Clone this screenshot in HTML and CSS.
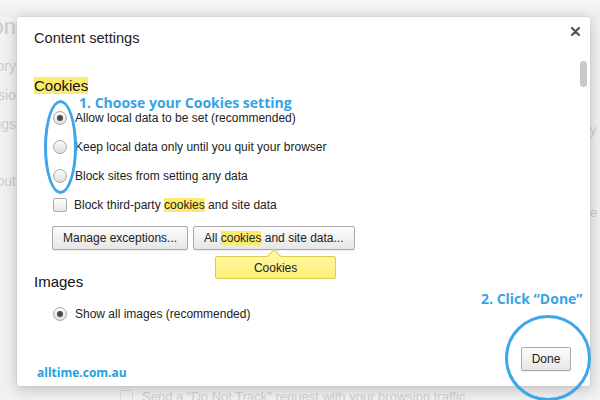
FILE: index.html
```html
<!DOCTYPE html>
<html>
<head>
<meta charset="utf-8">
<link rel="stylesheet" href="styles.css">
</head>
<body>
<div class="page">
  <div class="topband"></div>
  <div class="bg-body">
    <nav class="bg-nav">
      <div class="bg-logo">Extension</div>
      <div class="bg-item first">History</div>
      <div class="bg-item">Extensio</div>
      <div class="bg-item">Settings</div>
      <div class="bg-item gap">About</div>
    </nav>
    <div class="bg-main">
      <div class="bg-row dnt"><span class="bg-check"></span><span>Send a "Do Not Track" request with your browsing traffic</span></div>
    </div>
  </div>
  <div class="bg-right">
    <div class="bg-r1">y</div>
    <div class="bg-r2">e a</div>
  </div>
</div>

<div class="dialog">
  <div class="dialog-header">
    <h1 class="title">Content settings</h1>
    <span class="close">
      <svg width="9" height="9" viewBox="0 0 9 9"><path d="M1 1 L8 8 M8 1 L1 8" stroke="#555" stroke-width="2.2" stroke-linecap="round"/></svg>
    </span>
  </div>
  <div class="scrollbar"><div class="thumb"></div></div>
  <div class="content">
    <h2 class="section"><span class="hl">Cookies</span></h2>
    <div class="options">
      <label class="row"><span class="radio on"></span><span>Allow local data to be set (recommended)</span></label>
      <label class="row"><span class="radio"></span><span>Keep local data only until you quit your browser</span></label>
      <label class="row"><span class="radio"></span><span>Block sites from setting any data</span></label>
      <label class="row chk"><span class="check"></span><span>Block third-party <span class="hl">cookies</span> and site data</span></label>
    </div>
    <div class="buttons">
      <button class="btn">Manage exceptions...</button>
      <button class="btn has-tip">All <span class="hl">cookies</span> and site data...<span class="tooltip">Cookies</span></button>
    </div>
    <h2 class="section images">Images</h2>
    <div class="options">
      <label class="row"><span class="radio on"></span><span>Show all images (recommended)</span></label>
    </div>
  </div>
  <div class="footer">
    <button class="btn done">Done</button>
  </div>

  <div class="note note1">1. Choose your Cookies setting</div>
  <div class="ring ring1"></div>
  <div class="note note2">2. Click “Done”</div>
  <div class="ring ring2"></div>
  <div class="brand">alltime.com.au</div>
</div>
</body>
</html>
```
FILE: styles.css
```css
html, body {
  margin: 0;
  padding: 0;
}
body {
  width: 600px;
  height: 400px;
  overflow: hidden;
  position: relative;
  font-family: "Liberation Sans", Arial, Helvetica, sans-serif;
  background: #f1f1f1;
  color: #222;
}
.page {
  height: 400px;
  display: flex;
  flex-direction: column;
  color: #c4c4c4;
  position: relative;
}
.topband {
  height: 17px;
  background: linear-gradient(#f7f7f7, #ededed);
  flex: none;
}
.bg-body {
  display: flex;
  flex: 1;
}
.bg-nav {
  width: 16px;
  overflow: hidden;
  display: flex;
  flex-direction: column;
  align-items: flex-end;
  flex: none;
}
.bg-logo {
  font-size: 22px;
  line-height: 26px;
  margin-top: -3px;
  white-space: nowrap;
  color: #cbcbcb;
}
.bg-item {
  font-size: 14px;
  line-height: 29px;
  white-space: nowrap;
  color: #cdcdcd;
}
.bg-item.first { margin-top: 12px; }
.bg-item.gap { margin-top: 28px; }
.bg-main {
  flex: 1;
  display: flex;
  flex-direction: column;
  justify-content: flex-end;
}
.bg-row {
  font-size: 13px;
  white-space: nowrap;
  display: flex;
  align-items: center;
  gap: 9px;
  color: #d0d0d0;
}
.dnt {
  margin-left: 104px;
  margin-bottom: -4px;
  height: 16px;
}
.bg-check {
  width: 11px;
  height: 11px;
  border: 1px solid #dcdcdc;
  border-radius: 2px;
}
.bg-right {
  position: absolute;
  right: 0;
  top: 0;
  width: 10px;
  height: 400px;
  overflow: hidden;
  display: flex;
  flex-direction: column;
  align-items: flex-start;
}
.bg-r1 {
  margin-top: 122px;
  font-size: 13px;
  color: #d0d0d0;
}
.bg-r2 {
  margin-top: 68px;
  font-size: 13px;
  color: #cccccc;
  white-space: nowrap;
}

/* dialog */
.dialog {
  position: absolute;
  left: 17px;
  top: 17px;
  width: 573px;
  height: 369px;
  background: #fff;
  border-radius: 3px;
  box-shadow: 0 3px 14px rgba(0,0,0,0.22), 0 0 2px rgba(0,0,0,0.12);
  display: flex;
  flex-direction: column;
  color: #222;
}
.dialog-header {
  display: flex;
  justify-content: space-between;
  align-items: center;
  padding: 12px 10px 0 17px;
}
.title {
  margin: 0;
  font-size: 14.6px;
  font-weight: normal;
  line-height: 18px;
  color: #222;
}
.close {
  display: flex;
  margin-top: -14px;
}
.scrollbar {
  position: absolute;
  right: 3px;
  top: 44px;
  width: 7px;
}
.thumb {
  height: 26px;
  border-radius: 4px;
  background: #c9c9c9;
}
.content {
  padding: 0 17px;
}
.section {
  margin: 30px 0 0;
  font-size: 15px;
  font-weight: normal;
  line-height: 18px;
  color: #111;
}
.section.images {
  margin-top: 23px;
}
.hl {
  background: #fbea6c;
}
.options {
  margin-top: 8px;
  display: flex;
  flex-direction: column;
}
.row {
  height: 29px;
  display: flex;
  align-items: center;
  font-size: 12px;
  color: #222;
  padding-left: 19px;
  white-space: nowrap;
}
.radio {
  width: 12px;
  height: 12px;
  border-radius: 50%;
  border: 1px solid #a9a9a9;
  background: linear-gradient(#fafafa, #dedede);
  margin-right: 8px;
  display: flex;
  align-items: center;
  justify-content: center;
  flex: none;
}
.radio.on::after {
  content: "";
  width: 6px;
  height: 6px;
  border-radius: 50%;
  background: #4a4a4a;
}
.check {
  width: 12px;
  height: 12px;
  border: 1px solid #a9a9a9;
  border-radius: 2px;
  background: linear-gradient(#fdfdfd, #e6e6e6);
  margin-right: 7px;
  flex: none;
}
.buttons {
  margin-top: 7px;
  padding-left: 18px;
  display: flex;
  gap: 5px;
}
.btn {
  height: 24px;
  font-family: "Liberation Sans", Arial, Helvetica, sans-serif;
  font-size: 12px;
  color: #222;
  padding: 0 10px;
  border: 1px solid #a8a8a8;
  border-radius: 2px;
  background: linear-gradient(#fcfcfc, #e6e6e6);
  white-space: nowrap;
  box-shadow: 0 1px 0 rgba(0,0,0,0.06);
}
.has-tip {
  position: relative;
}
.tooltip {
  position: absolute;
  left: 21px;
  top: 29px;
  width: 119px;
  height: 21px;
  display: flex;
  align-items: center;
  justify-content: center;
  font-size: 12px;
  color: #222;
  background: linear-gradient(#fff7a0, #fdef74);
  border: 1px solid #dccd4f;
  border-radius: 2px;
}
.tooltip::before {
  content: "";
  position: absolute;
  left: 53px;
  top: -6px;
  width: 9px;
  height: 9px;
  background: #fff7a0;
  border-left: 1px solid #dccd4f;
  border-top: 1px solid #dccd4f;
  transform: rotate(45deg);
}
.footer {
  margin-top: auto;
  display: flex;
  justify-content: flex-end;
  padding: 0 19px 15px;
}
.btn.done {
  height: 24px;
  width: 50px;
  padding: 0;
}

/* annotations */
.note {
  position: absolute;
  font-family: "Open Sans", sans-serif;
  font-weight: bold;
  font-size: 14px;
  color: #36a3e6;
  white-space: nowrap;
  line-height: 18px;
}
.note1 {
  left: 62px;
  top: 77px;
}
.note2 {
  left: 464px;
  top: 273px;
}
.ring {
  position: absolute;
  border: 3px solid #3ea6ea;
  border-radius: 50%;
  box-sizing: border-box;
}
.ring1 {
  left: 27px;
  top: 83px;
  width: 33px;
  height: 94px;
}
.ring2 {
  left: 488px;
  top: 298px;
  width: 86px;
  height: 86px;
}
.brand {
  position: absolute;
  left: 20px;
  top: 349px;
  font-family: "Open Sans", sans-serif;
  font-weight: bold;
  font-size: 12px;
  line-height: 14px;
  color: #27a0dc;
}
```
